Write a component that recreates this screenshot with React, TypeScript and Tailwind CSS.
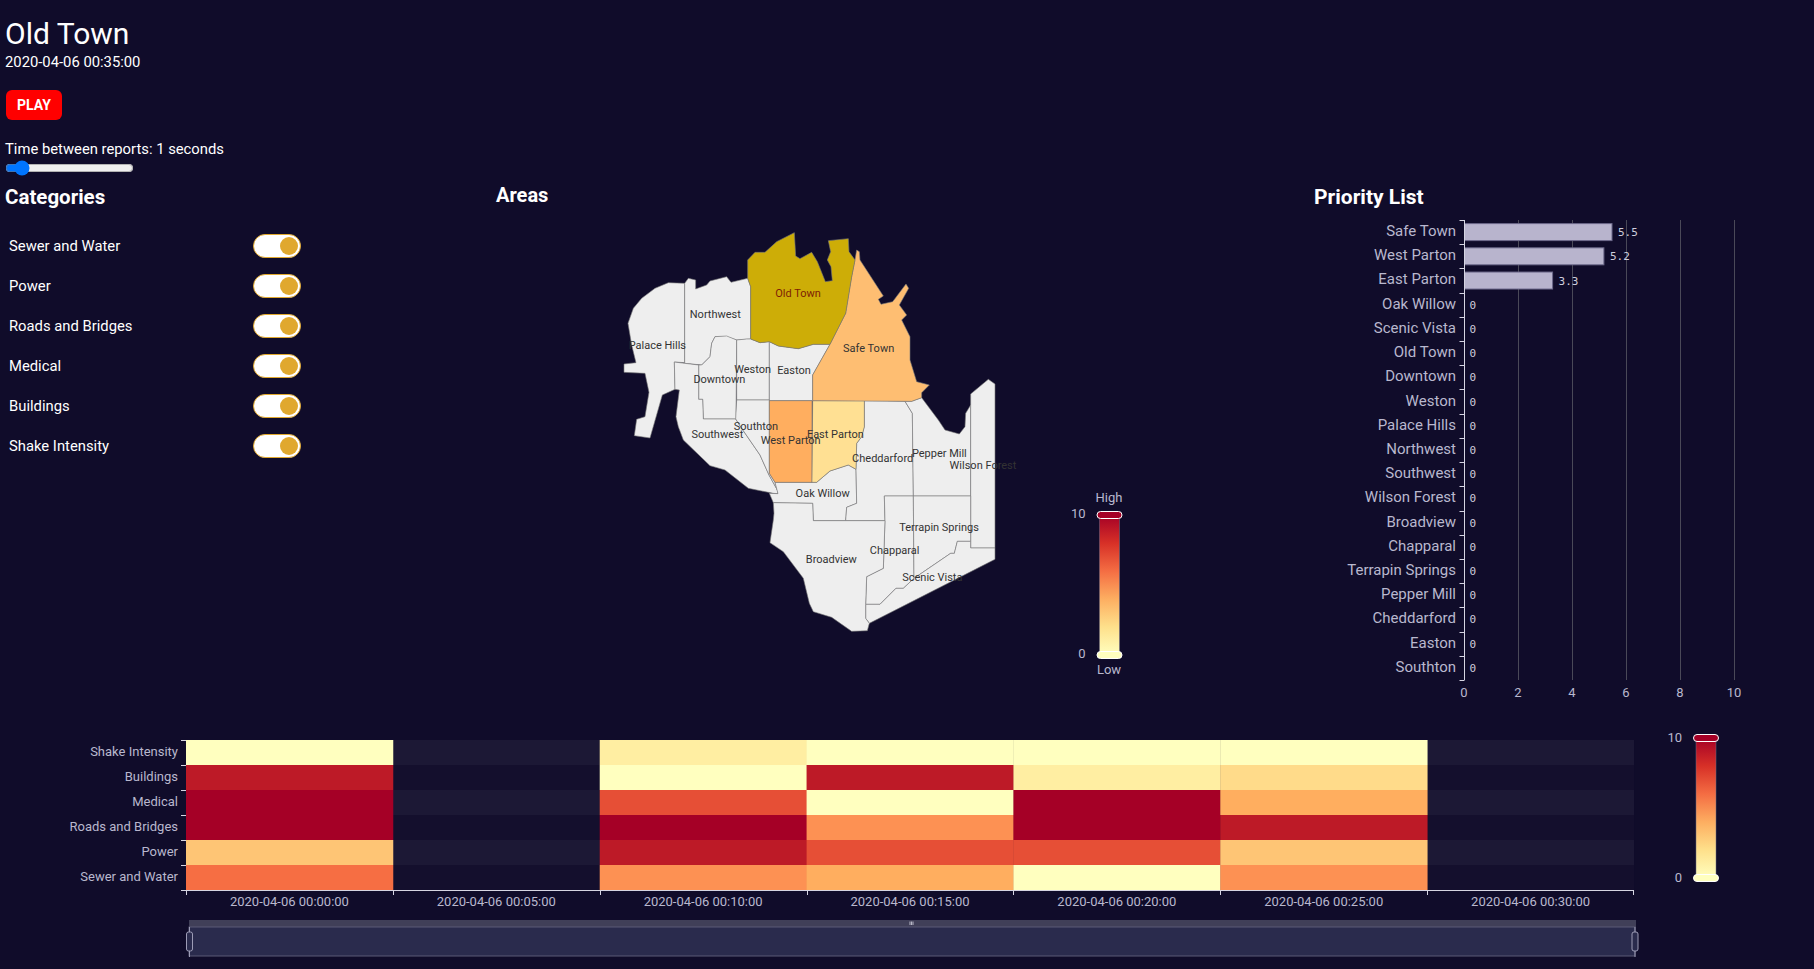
const FONT = "font-['Roboto',sans-serif]";

const categories = ["Sewer and Water", "Power", "Roads and Bridges", "Medical", "Buildings", "Shake Intensity"];

const priorities: [string, number][] = [
  ["Safe Town", 5.5],
  ["West Parton", 5.2],
  ["East Parton", 3.3],
  ["Oak Willow", 0],
  ["Scenic Vista", 0],
  ["Old Town", 0],
  ["Downtown", 0],
  ["Weston", 0],
  ["Palace Hills", 0],
  ["Northwest", 0],
  ["Southwest", 0],
  ["Wilson Forest", 0],
  ["Broadview", 0],
  ["Chapparal", 0],
  ["Terrapin Springs", 0],
  ["Pepper Mill", 0],
  ["Cheddarford", 0],
  ["Easton", 0],
  ["Southton", 0],
];

// map shapes are traced at 3x, the group below scales them back down
const regions: { fill: string; points: string }[] = [
  { fill: "#eeeeee", points: "254,220 205,218 165,235 125,265 100,295 84,340 95,405 108,458 72,462 72,487 135,490 147,547 135,620 110,628 103,677 150,684 187,555 225,538 223,456 254,458" },
  { fill: "#eeeeee", points: "254,220 265,205 287,210 287,237 320,225 330,213 380,200 393,217 443,205 452,230 452,387 410,390 380,380 345,380 335,400 330,440 305,465 254,460" },
  { fill: "#eeeeee", points: "345,380 380,378 410,390 408,627 310,627 308,568 296,568 296,465 305,465 330,440 335,400" },
  { fill: "#eeeeee", points: "223,456 254,460 296,465 296,568 308,568 310,627 407,627 425,655 480,735 507,795 532,840 534,851 520,850 445,835 375,780 330,767 250,690 235,650 228,620 238,540 225,538" },
  { fill: "#eeeeee", points: "410,390 440,387 452,387 480,398 508,395 508,570 410,570" },
  { fill: "#eeeeee", points: "508,395 535,408 595,416 640,403 690,403 638,495 638,572 508,572" },
  { fill: "#eeeeee", points: "410,570 508,570 508,790 525,817 532,840 507,795 480,735 425,655 407,627" },
  { fill: "#eeeeee", points: "508,850 534,851 525,817 650,817 690,783 745,765 768,778 770,880 740,892 737,932 640,932 638,880 520,878" },
  { fill: "#eeeeee", points: "793,572 915,574 937,610 940,858 853,858 855,932 737,932 740,892 770,880 768,778 770,700 785,680 793,650" },
  { fill: "#eeeeee", points: "915,574 935,574 965,563 1015,630 1035,660 1078,672 1095,650 1097,610 1112,585 1112,858 940,858 937,610" },
  { fill: "#eeeeee", points: "1112,552 1165,508 1185,522 1185,1014 1112,1014" },
  { fill: "#eeeeee", points: "853,858 940,858 942,1105 910,1135 888,1135 840,1183 797,1183 800,1100 850,1075 855,932" },
  { fill: "#eeeeee", points: "940,858 1112,858 1112,994 1072,994 1063,1030 1052,1030 942,1105" },
  { fill: "#eeeeee", points: "1112,994 1112,1014 1185,1014 1185,1048 808,1240 797,1225 797,1183 840,1183 888,1135 910,1135 942,1105 1052,1030 1063,1030 1072,994" },
  { fill: "#eeeeee", points: "520,878 638,880 640,932 855,932 850,1075 800,1100 797,1183 797,1225 808,1240 802,1262 755,1264 695,1222 640,1205 628,1180 610,1105 550,1025 510,998 520,930 522,910" },
  { fill: "#ffae5f", points: "508,572 636,572 636,817 525,817 508,790" },
  { fill: "#ffe093", points: "638,572 793,572 793,650 785,680 770,700 768,778 745,765 690,783 650,817 636,817" },
  { fill: "#febe72", points: "765,150 770,120 778,125 780,150 850,258 835,268 843,283 878,275 918,222 926,235 898,285 920,315 905,330 930,380 930,450 950,515 988,525 965,548 965,563 935,574 638,572 638,495 690,403 737,310 755,200" },
  { fill: "#cdad07", points: "443,150 465,127 495,127 530,95 583,68 587,138 600,146 635,127 652,155 676,215 697,212 693,170 682,150 692,125 685,92 745,86 747,125 765,150 755,200 737,310 690,403 640,403 595,416 535,408 508,395 480,398 452,387 452,230 443,205" },
];

const mapLabels: [string, number, number][] = [
  ["Northwest", 346, 316],
  ["Palace Hills", 172, 409],
  ["Safe Town", 806, 418],
  ["Weston", 458, 481],
  ["Easton", 582, 484],
  ["Downtown", 358, 511],
  ["Southton", 468, 650],
  ["Southwest", 352, 676],
  ["West Parton", 572, 694],
  ["East Parton", 706, 676],
  ["Cheddarford", 848, 748],
  ["Pepper Mill", 1018, 733],
  ["Wilson Forest", 1149, 769],
  ["Oak Willow", 668, 853],
  ["Terrapin Springs", 1017, 955],
  ["Chapparal", 884, 1023],
  ["Broadview", 694, 1051],
  ["Scenic Vista", 997, 1105],
];

const Y = "#ffffbf";
const P = "#ffeea2";
const Q = "#ffdb8a";
const K = "#fec575";
const A = "#ffae5f";
const O = "#fd9153";
const S = "#f66e43";
const E = "#e64f36";
const R = "#bd1a27";
const D = "#a50026";

const heatRows: { name: string; cells: (string | null)[] }[] = [
  { name: "Shake Intensity", cells: [Y, null, P, Y, Y, Y, null] },
  { name: "Buildings", cells: [R, null, Y, R, P, Q, null] },
  { name: "Medical", cells: [D, null, E, Y, D, A, null] },
  { name: "Roads and Bridges", cells: [D, null, D, O, D, R, null] },
  { name: "Power", cells: [K, null, R, E, E, K, null] },
  { name: "Sewer and Water", cells: [S, null, O, A, Y, O, null] },
];

const times = ["00:00:00", "00:05:00", "00:10:00", "00:15:00", "00:20:00", "00:25:00", "00:30:00"];

function Scale({ x, top, id, labelDy = 0 }: { x: number; top: number; id: string; labelDy?: number }) {
  const bottom = top + 140;
  return (
    <g>
      <defs>
        <linearGradient id={id} x1="0" y1="0" x2="0" y2="1">
          <stop offset="0%" stopColor="#a50026" />
          <stop offset="20%" stopColor="#d73027" />
          <stop offset="40%" stopColor="#f46d43" />
          <stop offset="60%" stopColor="#fdae61" />
          <stop offset="80%" stopColor="#fee08b" />
          <stop offset="100%" stopColor="#ffffbf" />
        </linearGradient>
      </defs>
      <rect x={x} y={top} width={20} height={140} fill={`url(#${id})`} stroke="#6e6d85" strokeWidth={0.5} />
      <rect x={x - 2.5} y={top - 3.5} width={25} height={7} rx={3.5} fill="#a50026" stroke="#fff" strokeWidth={1} />
      <rect x={x - 2.5} y={bottom - 3.5} width={25} height={7} rx={3.5} fill="#ffffbf" stroke="#fff" strokeWidth={1} />
      <text x={x - 14} y={top + labelDy} textAnchor="end" dominantBaseline="middle" fontSize={13} fill="#b9b8ce">10</text>
      <text x={x - 14} y={bottom + labelDy} textAnchor="end" dominantBaseline="middle" fontSize={13} fill="#b9b8ce">0</text>
    </g>
  );
}

function AreaMap() {
  return (
    <svg viewBox="496 210 818 470" width={818} height={470} className="block overflow-visible">
      <g transform="translate(600 210) scale(0.33333)">
        {regions.map((r, i) => (
          <polygon key={i} points={r.points} fill={r.fill} stroke="#7a7a7a" strokeWidth={1.8} strokeLinejoin="round" />
        ))}
        <text x={594} y={253} textAnchor="middle" dominantBaseline="middle" fontSize={33} fill="#7e1d05">Old Town</text>
        {mapLabels.map(([name, x, y]) => (
          <text key={name} x={x} y={y} textAnchor="middle" dominantBaseline="middle" fontSize={33} fill="#333">
            {name}
          </text>
        ))}
      </g>
      <Scale x={1099.5} top={515} id="scale-map" />
      <text x={1109} y={499} textAnchor="middle" dominantBaseline="middle" fontSize={13} fill="#b9b8ce">High</text>
      <text x={1109} y={671} textAnchor="middle" dominantBaseline="middle" fontSize={13} fill="#b9b8ce">Low</text>
    </svg>
  );
}

function PriorityChart() {
  const x0 = 1464.5;
  const unit = 27;
  const rowH = 460 / 19;
  return (
    <svg viewBox="1314 210 500 500" width={500} height={500} className="block overflow-visible">
      {[2, 4, 6, 8, 10].map((t) => (
        <line key={t} x1={x0 + t * unit} x2={x0 + t * unit} y1={220} y2={680} stroke="#4a4958" />
      ))}
      {priorities.map(([name, value], i) => {
        const cy = 220 + rowH * (i + 0.5);
        return (
          <g key={name}>
            <line x1={x0 - 5} x2={x0} y1={Math.round(220 + rowH * i) + 0.5} y2={Math.round(220 + rowH * i) + 0.5} stroke="#d6d5e2" />
            <text x={1456} y={cy} textAnchor="end" dominantBaseline="middle" fontSize={15} fill="#b9b8ce">
              {name}
            </text>
            {value > 0 && (
              <rect x={x0} y={cy - 8.5} width={value * unit - 1} height={17} fill="#b8b4cd" stroke="#6b6889" />
            )}
            <text
              x={x0 + value * unit + 5}
              y={cy + 1}
              dominantBaseline="middle"
              fontSize={11}
              fontFamily="'DejaVu Sans Mono', monospace"
              fill="#cfcedd"
            >
              {value}
            </text>
          </g>
        );
      })}
      <line x1={x0} x2={x0} y1={220} y2={680} stroke="#d6d5e2" />
      <line x1={x0 - 5} x2={x0} y1={680.5} y2={680.5} stroke="#d6d5e2" />
      {[0, 2, 4, 6, 8, 10].map((t) => (
        <text key={t} x={x0 + t * unit - 0.5} y={694} textAnchor="middle" dominantBaseline="middle" fontSize={13} fill="#b9b8ce">
          {t}
        </text>
      ))}
    </svg>
  );
}

function HeatChart() {
  const left = 186;
  const colW = 206.86;
  const top = 740;
  const rowH = 25;
  return (
    <svg viewBox="0 730 1814 239" width={1814} height={239} className="block">
      {heatRows.map((row, r) => (
        <g key={row.name}>
          <rect x={left} y={top + r * rowH} width={colW * 7} height={rowH} fill={r % 2 === 0 ? "#1c1835" : "#140f2d"} />
          {row.cells.map((c, i) =>
            c ? <rect key={i} x={left + i * colW} y={top + r * rowH} width={colW + 0.4} height={rowH} fill={c} /> : null,
          )}
          <line x1={181} x2={186} y1={top + r * rowH + 0.5} y2={top + r * rowH + 0.5} stroke="#d6d5e2" />
          <text x={178} y={top + r * rowH + 13} textAnchor="end" dominantBaseline="middle" fontSize={13} fill="#b9b8ce">
            {row.name}
          </text>
        </g>
      ))}
      <line x1={181} x2={186} y1={890.5} y2={890.5} stroke="#d6d5e2" />
      <line x1={186} x2={1634} y1={890.5} y2={890.5} stroke="#d6d5e2" />
      {times.map((t, i) => (
        <g key={t}>
          <line x1={Math.round(left + i * colW) + 0.5} x2={Math.round(left + i * colW) + 0.5} y1={890} y2={895} stroke="#d6d5e2" />
          <text x={left + (i + 0.5) * colW} y={903} textAnchor="middle" dominantBaseline="middle" fontSize={13} fill="#b9b8ce">
            2020-04-06 {t}
          </text>
        </g>
      ))}
      <line x1={1633.5} x2={1633.5} y1={890} y2={895} stroke="#d6d5e2" />

      {/* zoom bar under the heatmap */}
      <rect x={189} y={920} width={1447} height={7} fill="#403f58" />
      <rect x={189} y={927} width={1446} height={29} fill="#2a2b4d" stroke="#5b5a76" />
      <path d="M910 921.5v3.5M911.5 921.5v3.5M913 921.5v3.5" stroke="#d6d5e2" strokeWidth={0.8} />
      {[189.5, 1635].map((x) => (
        <g key={x}>
          <line x1={x} x2={x} y1={927} y2={957} stroke="#9d9cb6" />
          <rect x={x - 3} y={932} width={6} height={19} rx={2} fill="#2a2b4d" stroke="#9d9cb6" />
        </g>
      ))}
      <Scale x={1696} top={738} id="scale-heat" labelDy={1} />
    </svg>
  );
}

export default function App() {
  return (
    <div className={`h-[969px] w-[1814px] overflow-hidden bg-[#100c2a] text-white ${FONT}`}>
      <header className="h-[182px] pl-[5px] pt-[16px]">
        <h1 className="text-[30px] leading-[35px]">Old Town</h1>
        <div className="text-[14.8px] leading-[22px]">2020-04-06 00:35:00</div>
        <button className="ml-px mt-[17px] block h-[30px] w-[56px] rounded-[6px] bg-[#ff0000] text-[14px] font-bold text-white">
          PLAY
        </button>
        <div className="mt-[18px] text-[14.8px] leading-[22px]">Time between reports: 1 seconds</div>
        <input type="range" min={0} max={12} defaultValue={1} className="block w-[129px]" />
      </header>

      <div className="flex h-[548px]">
        <section className="w-[496px] pl-[5px]">
          <h2 className="text-[20.5px] font-bold leading-[30px]">Categories</h2>
          <div className="mt-[14px] flex w-[296px] flex-col">
            {categories.map((c) => (
              <div key={c} className="flex h-[40px] items-center justify-between pl-[4px]">
                <span className="text-[14.8px]">{c}</span>
                <span className="flex h-[24px] w-[48px] items-center justify-end rounded-full border border-[#e0a82e] bg-white pr-[2px]">
                  <span className="h-[18px] w-[18px] rounded-full bg-[#e0a82e]" />
                </span>
              </div>
            ))}
          </div>
        </section>

        <section className="w-[818px]">
          <h2 className="mb-[2px] text-[20px] font-bold leading-[26px]">Areas</h2>
          <AreaMap />
        </section>

        <section className="flex-1">
          <h2 className="-mb-[2px] text-[21px] font-bold leading-[30px]">Priority List</h2>
          <PriorityChart />
        </section>
      </div>

      <HeatChart />
    </div>
  );
}
